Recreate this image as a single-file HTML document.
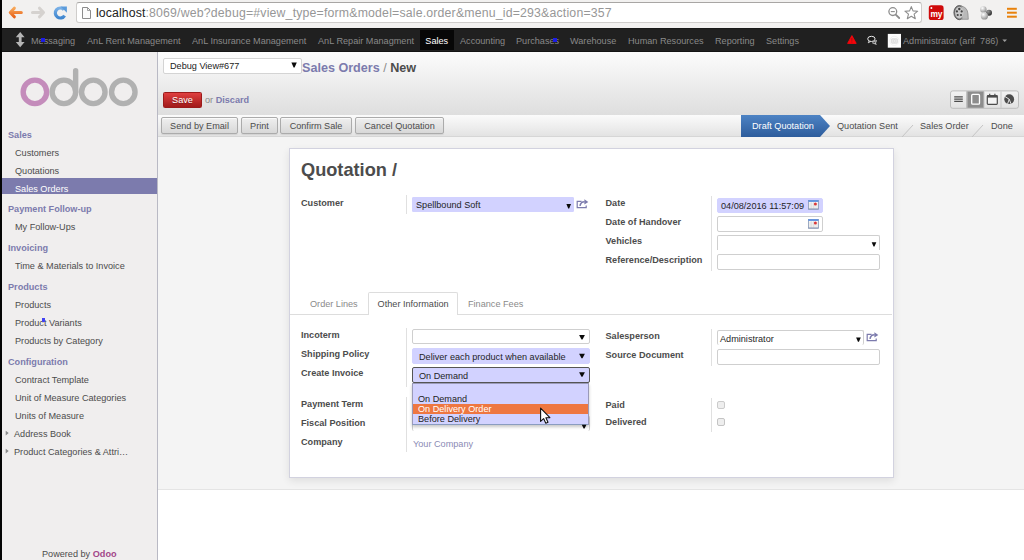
<!DOCTYPE html>
<html><head><meta charset="utf-8"><title>New - Odoo</title>
<style>
html,body{margin:0;padding:0;}
body{width:1024px;height:560px;overflow:hidden;position:relative;background:#fff;font-family:"Liberation Sans",sans-serif;font-size:9.15px;color:#4c4c4c;}
.abs{position:absolute;white-space:nowrap;}
/* browser chrome */
#chrome{left:0;top:0;width:1024px;height:28px;background:#f2f1f0;}
#urlbox{left:76px;top:2px;width:846px;height:21px;background:#fff;border:1px solid #cfcdcb;border-top-color:#a8a6a4;border-radius:3px;box-sizing:border-box;}
#url{left:96px;top:5px;font-size:12.3px;line-height:16px;color:#979797;letter-spacing:0.1px;}
#url b{font-weight:normal;color:#222;}
/* navbar */
#nav{left:0;top:28px;width:1024px;height:24px;background:#202020;box-shadow:inset 0 -1px 0 #141414, inset 0 1px 0 #181818;}
.nv{top:28px;height:24px;line-height:26px;font-size:9.15px;color:#898989;}
#nvsales{left:419.5px;width:34.5px;background:#070707;color:#fff;text-align:left;padding-left:5.8px;box-sizing:border-box;top:30.3px;height:19.6px;line-height:23px;}
/* left strip */
#strip{left:0;top:0;width:2px;height:560px;background:#040404;}
/* sidebar */
#side{left:2px;top:52px;width:155px;height:508px;background:#f0eeee;border-right:1px solid #b9b9c4;}
.sh{transform:translateY(0.6px);left:8px;font-weight:bold;color:#7c7bad;font-size:9.15px;line-height:12px;}
.si{transform:translateY(0.6px);left:15px;color:#4c4c4c;font-size:9.15px;line-height:12px;}
#sact{left:2px;top:178px;width:155px;height:15.9px;background:#7c7bad;}
/* main */
#hdr{left:158px;top:52px;width:866px;height:63px;background:linear-gradient(#fcfcfc,#dedede);}
#btnrow{left:158px;top:115px;width:866px;height:22px;background:linear-gradient(#fbfbfb,#e3e3e3);border-bottom:1px solid #d6d6d6;box-sizing:border-box;}
#sheetbg{left:158px;top:137px;width:866px;height:353px;background:#f4f4f4;border-bottom:1px solid #e4e4e4;box-sizing:border-box;}
#sheet{left:289px;top:148px;width:604.6px;height:329.5px;background:#fff;border:1px solid #d2d2df;box-sizing:border-box;box-shadow:0 3px 8px rgba(0,0,0,0.09);}
.btn{top:117px;height:17px;box-sizing:border-box;border:1px solid #ababab;border-radius:2px;background:linear-gradient(#efefef,#d8d8d8);color:#4c4c4c;font-size:9.15px;line-height:16px;text-align:center;box-shadow:inset 0 1px 0 rgba(255,255,255,0.7),0 1px 1px rgba(0,0,0,0.08);}
.lbl{font-weight:bold;color:#4c4c4c;font-size:9.15px;line-height:12px;}
.inp{box-sizing:border-box;border:1px solid #cfcfcf;border-radius:2px;background:#fff;font-size:9.15px;line-height:13px;color:#1f1f1f;padding-left:3px;}
.req{background:#d2d2ff;border-color:#d2d2ff;}
.vsep{width:1px;background:#e0e0e0;}
.arr{font-size:7px;color:#000;}
</style></head><body>
<div id="chrome" class="abs"></div>
<div id="urlbox" class="abs"></div>
<div id="url" class="abs"><b>localhost</b><span style="letter-spacing:0.18px">:8069/web?debug=#view_type=form&amp;model=sale.order&amp;menu_id=293&amp;action=357</span></div>


<!-- browser icons -->
<svg class="abs" style="left:0;top:0" width="1024" height="52" viewBox="0 0 1024 52">
<defs>
<linearGradient id="og" x1="0" y1="0" x2="0" y2="1"><stop offset="0" stop-color="#f7a85a"/><stop offset="1" stop-color="#e8641a"/></linearGradient>
<linearGradient id="bg2" x1="0" y1="0" x2="0" y2="1"><stop offset="0" stop-color="#79b0e6"/><stop offset="1" stop-color="#3f86cf"/></linearGradient>
<radialGradient id="ball" cx="0.35" cy="0.3" r="0.8"><stop offset="0" stop-color="#fff"/><stop offset="1" stop-color="#888"/></radialGradient>
<radialGradient id="ballk" cx="0.35" cy="0.3" r="0.8"><stop offset="0" stop-color="#999"/><stop offset="1" stop-color="#222"/></radialGradient>
</defs>
<!-- back -->
<path d="M21.3 12.5 H10.8 M14.3 8.2 L10.3 12.5 L14.3 16.8" stroke="url(#og)" stroke-width="3.1" stroke-linecap="round" stroke-linejoin="round" fill="none"/>
<!-- forward -->
<path d="M32.5 12.5 H43 M39.5 8.2 L43.5 12.5 L39.5 16.8" stroke="#d5d2cf" stroke-width="3.1" stroke-linecap="round" stroke-linejoin="round" fill="none"/>
<!-- reload -->
<path d="M64.6 15.6 A5.0 5.0 0 1 1 64.0 9.6" stroke="url(#bg2)" stroke-width="3.2" fill="none"/>
<path d="M60.6 6.4 H66.9 V12.7 Z" fill="#5b9bdb"/>
<!-- page icon -->
<path d="M82.5 7.5 H87.5 L90.5 10.5 V18.5 H82.5 Z" fill="#fbfbfb" stroke="#8c8c8c" stroke-width="1"/>
<path d="M87.5 7.5 V10.5 H90.5" fill="none" stroke="#8c8c8c" stroke-width="0.8"/>
<!-- zoom icon -->
<circle cx="892.8" cy="11.6" r="3.9" fill="none" stroke="#8d8d8d" stroke-width="1.3"/>
<path d="M895.7 14.6 L899.2 18" stroke="#8d8d8d" stroke-width="1.8" stroke-linecap="round"/>
<path d="M890.8 11.6 H894.8" stroke="#8d8d8d" stroke-width="1.1"/>
<!-- star -->
<path d="M911.3 6.6 L913.0 10.9 L917.7 11.2 L914.1 14.2 L915.3 18.7 L911.3 16.2 L907.3 18.7 L908.5 14.2 L904.9 11.2 L909.6 10.9 Z" fill="none" stroke="#8d8d8d" stroke-width="1.1" stroke-linejoin="round"/>
<!-- my icon -->
<rect x="928.8" y="5.3" width="14.8" height="14.7" rx="2.6" fill="#cf0a0a"/>
<circle cx="931.4" cy="8" r="1" fill="#fff"/>
<!-- film -->
<ellipse cx="959.3" cy="12.6" rx="5.4" ry="7.1" fill="#7d7d7d" stroke="#4a4a4a" stroke-width="0.8"/>
<path d="M961 6 Q967.5 7 968 14 L968.3 19.3 L962 19.3 Z" fill="#b9b9b9" stroke="#777" stroke-width="0.6"/>
<ellipse cx="959.3" cy="12.6" rx="4.2" ry="5.8" fill="#c9c9c9"/>
<circle cx="959.3" cy="9" r="1.2" fill="#444"/><circle cx="956.9" cy="11.4" r="1.1" fill="#444"/><circle cx="961.7" cy="11.4" r="1.1" fill="#444"/><circle cx="957.7" cy="15" r="1.1" fill="#444"/><circle cx="961" cy="15" r="1.1" fill="#444"/>
<!-- balls -->
<circle cx="989" cy="12.7" r="3.0" fill="url(#ballk)"/>
<circle cx="983.4" cy="9.4" r="3.2" fill="url(#ball)"/>
<circle cx="984.4" cy="15.9" r="3.6" fill="url(#ball)"/>
<!-- hamburger -->
<rect x="1007" y="7.8" width="9.8" height="2" fill="#e8820c"/>
<rect x="1007" y="11.7" width="9.8" height="2" fill="#e8820c"/>
<rect x="1007" y="15.7" width="9.8" height="2" fill="#e8820c"/>
</svg>
<div class="abs" style="left:929.4px;top:9.4px;width:14px;text-align:center;font-size:8.4px;line-height:11px;font-weight:bold;color:#fff;letter-spacing:-0.2px">my</div>
<div id="nav" class="abs"></div>
<div class="abs nv" style="left:31px">Messaging</div>
<div class="abs nv" style="left:87px">AnL Rent Management</div>
<div class="abs nv" style="left:192px">AnL Insurance Management</div>
<div class="abs nv" style="left:318px">AnL Repair Managment</div>
<div class="abs nv" id="nvsales">Sales</div>
<div class="abs nv" style="left:460px">Accounting</div>
<div class="abs nv" style="left:516px">Purchases</div>
<div class="abs nv" style="left:570px">Warehouse</div>
<div class="abs nv" style="left:628px">Human Resources</div>
<div class="abs nv" style="left:715px">Reporting</div>
<div class="abs nv" style="left:766px">Settings</div>
<div class="abs nv" style="left:903px">Administrator (arif&nbsp; 786)</div>

<div id="side" class="abs"></div>
<svg class="abs" style="left:0;top:28px" width="1024" height="24" viewBox="0 28 1024 24">
<!-- drag icon -->
<path d="M20.2 32 L24.6 37.3 H21.6 V41.9 H24.6 L20.2 47.2 L15.8 41.9 H18.8 V37.3 H15.8 Z" fill="#b5b5b5"/>
<!-- warning -->
<path d="M851.9 35.6 L856.2 43.4 H847.6 Z" fill="#f5050a" stroke="#f5050a" stroke-width="0.9" stroke-linejoin="round"/>
<rect x="851.4" y="38" width="1" height="2.8" fill="#a01010"/><rect x="851.4" y="41.5" width="1" height="1" fill="#a01010"/>
<!-- chat -->
<path d="M872.5 42 Q875.5 42.4 876.2 40.2 Q876.4 42.6 875.2 43 L876.3 44.3 L873.8 43.4 Q872.6 43.3 872.2 42.6" fill="none" stroke="#d9d9d9" stroke-width="0.9"/>
<ellipse cx="871.4" cy="38.9" rx="3.7" ry="2.6" fill="#1a1a1a" stroke="#e9e9e9" stroke-width="1"/>
<path d="M869.2 41 L868.2 42.8 L870.6 41.6" fill="none" stroke="#e9e9e9" stroke-width="0.8"/>
<!-- avatar -->
<rect x="887.8" y="33.9" width="13.2" height="13.8" fill="#fdfdfd"/>
<circle cx="894.4" cy="40.8" r="4.6" fill="none" stroke="#ececec" stroke-width="0.8"/><rect x="891.4" y="38.8" width="6" height="4.4" rx="0.6" fill="#e9e9e9" stroke="#d2d2d2" stroke-width="0.7"/>
<circle cx="894.4" cy="41" r="1.1" fill="#f6f6f6" stroke="#d2d2d2" stroke-width="0.6"/>
<!-- caret -->
<path d="M1002.4 39.6 H1007 L1004.7 42 Z" fill="#9d9d9d"/>
</svg>
<!-- logo -->
<svg class="abs" style="left:2px;top:52px" width="155" height="70" viewBox="2 52 155 70">
<circle cx="34.9" cy="91.9" r="11.75" fill="none" stroke="#c48cbb" stroke-width="5.4"/>
<circle cx="63.9" cy="91.9" r="11.75" fill="none" stroke="#b1b1b1" stroke-width="5.4"/>
<path d="M75.65 91.9 V70.8" stroke="#b1b1b1" stroke-width="5.4" stroke-linecap="round" fill="none"/>
<circle cx="93.3" cy="91.9" r="11.75" fill="none" stroke="#b1b1b1" stroke-width="5.4"/>
<circle cx="123.3" cy="91.9" r="11.75" fill="none" stroke="#b1b1b1" stroke-width="5.4"/>
</svg>

<div id="sact" class="abs"></div>
<div class="abs sh" style="top:128px">Sales</div>
<div class="abs si" style="top:146px">Customers</div>
<div class="abs si" style="top:164px">Quotations</div>
<div class="abs si" style="top:182px;color:#fff">Sales Orders</div>
<div class="abs sh" style="top:202px">Payment Follow-up</div>
<div class="abs si" style="top:220px">My Follow-Ups</div>
<div class="abs sh" style="top:241px">Invoicing</div>
<div class="abs si" style="top:259px">Time &amp; Materials to Invoice</div>
<div class="abs sh" style="top:280px">Products</div>
<div class="abs si" style="top:298px">Products</div>
<div class="abs si" style="top:316px">Product Variants</div>
<div class="abs si" style="top:334px">Products by Category</div>
<div class="abs sh" style="top:355px">Configuration</div>
<div class="abs si" style="top:373px">Contract Template</div>
<div class="abs si" style="top:391px">Unit of Measure Categories</div>
<div class="abs si" style="top:409px">Units of Measure</div>
<div class="abs si" style="top:427px;left:14px">Address Book</div>
<div class="abs si" style="top:445px;left:14px">Product Categories &amp; Attri…</div>
<div class="abs si" style="top:547px;left:42px">Powered by <b style="color:#a24689">Odoo</b></div>

<div id="hdr" class="abs"></div>
<div id="btnrow" class="abs"></div>
<div id="sheetbg" class="abs"></div>
<div id="sheet" class="abs"></div>

<div class="abs btn" style="left:161px;width:77px">Send by Email</div>
<div class="abs btn" style="left:241px;width:37px">Print</div>
<div class="abs btn" style="left:280px;width:72px">Confirm Sale</div>
<div class="abs btn" style="left:355px;width:89px">Cancel Quotation</div>


<!-- header controls -->
<div class="abs inp" style="left:163px;top:58px;width:138.5px;height:15.5px;padding-left:6px;line-height:14px;color:#222;border-color:#d4d4d4">Debug View#677</div>
<div class="abs" id="bc" style="left:302px;top:60.1px;font-size:12.6px;line-height:16px;font-weight:bold;color:#7c7bad">Sales Orders <span style="font-weight:normal;color:#8c8c8c">/</span> <span style="color:#4c4c4c">New</span></div>
<div class="abs" id="save" style="left:163px;top:92px;width:39px;height:16px;box-sizing:border-box;border:1px solid #9b1b1b;border-radius:1.5px;background:linear-gradient(#df3f3f,#a21a1a);color:#fff;font-size:9.15px;line-height:14.5px;text-align:center;text-shadow:0 1px 1px rgba(0,0,0,0.3)">Save</div>
<div class="abs" style="left:205px;top:94px;font-size:9.15px;line-height:12px;color:#8a8a8a">or <b style="color:#7c7bad">Discard</b></div>

<!-- sheet content -->
<div class="abs" id="h1" style="left:301px;top:158.8px;font-size:18.2px;line-height:22px;font-weight:bold;color:#4c4c4c">Quotation /</div>
<div class="abs lbl" style="left:301px;top:196.9px">Customer</div>
<div class="abs vsep" style="left:406px;top:195px;height:19px"></div>
<div class="abs inp req" style="left:412px;top:197px;width:162px;height:15px;line-height:14.6px;border-radius:1px">Spellbound Soft</div>

<div class="abs lbl" style="left:605.5px;top:197px">Date</div>
<div class="abs lbl" style="left:605.5px;top:216px">Date of Handover</div>
<div class="abs lbl" style="left:605.5px;top:235px">Vehicles</div>
<div class="abs lbl" style="left:605.5px;top:253.6px">Reference/Description</div>
<div class="abs vsep" style="left:711px;top:196px;height:75px"></div>
<div class="abs inp req" style="left:717px;top:198px;width:105.5px;height:15px;line-height:15.4px">04/08/2016 11:57:09</div>
<div class="abs inp" style="left:717px;top:216px;width:105.5px;height:15.6px"></div>
<div class="abs inp" style="left:717px;top:235px;width:163px;height:15px;border-bottom:none;border-radius:2px 2px 0 0"></div>
<div class="abs inp" style="left:717px;top:254px;width:163px;height:15.6px"></div>

<svg class="abs" style="left:576px;top:198.8px" width="13" height="11" viewBox="0 0 13 11"><path d="M5.6 2.4 H1.2 V8.7 H10.2 V6.6" fill="none" stroke="#7c7bad" stroke-width="1.2"/><path d="M4 6.8 Q4.6 2.9 8.6 2.8" fill="none" stroke="#7c7bad" stroke-width="1.6"/><path d="M8.4 0.2 L12.3 2.9 L8.4 5.6 Z" fill="#7c7bad"/></svg><svg class="abs" style="left:866.2px;top:332.4px" width="13" height="11" viewBox="0 0 13 11"><path d="M5.6 2.4 H1.2 V8.7 H10.2 V6.6" fill="none" stroke="#7c7bad" stroke-width="1.2"/><path d="M4 6.8 Q4.6 2.9 8.6 2.8" fill="none" stroke="#7c7bad" stroke-width="1.6"/><path d="M8.4 0.2 L12.3 2.9 L8.4 5.6 Z" fill="#7c7bad"/></svg><svg class="abs" style="left:808.2px;top:200.4px" width="11" height="10" viewBox="0 0 11 10"><rect x="0.4" y="0.4" width="10" height="8.8" fill="#f6f6f6" stroke="#8696b4" stroke-width="0.8"/><rect x="0.4" y="0.2" width="10" height="1.7" fill="#5b8fe2"/><path d="M1 4 H10 M1 6 H10 M1 8 H10 M3.2 2 V9 M5.6 2 V9" stroke="#d0d0d0" stroke-width="0.5"/><circle cx="7.4" cy="4.1" r="1.5" fill="#d9383a"/><rect x="0.4" y="8.6" width="10" height="0.8" fill="#7f8fb0"/></svg><svg class="abs" style="left:808.2px;top:219px" width="11" height="10" viewBox="0 0 11 10"><rect x="0.4" y="0.4" width="10" height="8.8" fill="#f6f6f6" stroke="#8696b4" stroke-width="0.8"/><rect x="0.4" y="0.2" width="10" height="1.7" fill="#5b8fe2"/><path d="M1 4 H10 M1 6 H10 M1 8 H10 M3.2 2 V9 M5.6 2 V9" stroke="#d0d0d0" stroke-width="0.5"/><circle cx="7.4" cy="4.1" r="1.5" fill="#d9383a"/><rect x="0.4" y="8.6" width="10" height="0.8" fill="#7f8fb0"/></svg>
<!-- tabs -->
<div class="abs" style="left:290px;top:314px;width:602px;height:1px;background:#ddd"></div>
<div class="abs" style="left:368px;top:292px;width:90px;height:23px;box-sizing:border-box;border:1px solid #ddd;border-bottom:none;background:#fff;border-radius:2px 2px 0 0"></div>
<div class="abs" style="left:310px;top:298px;line-height:12px;color:#8a8a8a">Order Lines</div>
<div class="abs" style="left:377.6px;top:298px;line-height:12px;color:#4c4c4c">Other Information</div>
<div class="abs" style="left:468px;top:298px;line-height:12px;color:#8a8a8a">Finance Fees</div>

<!-- left group -->
<div class="abs lbl" style="left:301px;top:329px">Incoterm</div>
<div class="abs lbl" style="left:301px;top:348px">Shipping Policy</div>
<div class="abs lbl" style="left:301px;top:367px">Create Invoice</div>
<div class="abs lbl" style="left:301px;top:398px">Payment Term</div>
<div class="abs lbl" style="left:301px;top:417px">Fiscal Position</div>
<div class="abs lbl" style="left:301px;top:435.6px">Company</div>
<div class="abs vsep" style="left:406px;top:328px;height:59px"></div>
<div class="abs vsep" style="left:406px;top:397px;height:55px"></div>
<div class="abs inp" style="left:412px;top:329.4px;width:177.6px;height:15px"></div>
<div class="abs inp req" style="left:412px;top:348px;width:177.6px;height:16px;padding-left:6px;line-height:16.6px">Deliver each product when available</div>
<div class="abs inp" style="left:412px;top:416px;width:177.6px;height:15px;border-bottom:none"></div>
<div class="abs inp req" style="left:412px;top:367px;width:177.6px;height:16px;padding-left:6px;line-height:16.6px;border-color:#555">On Demand</div>
<div class="abs" id="dd" style="left:412px;top:383px;width:177px;height:42px;box-sizing:border-box;background:#d2d2ff;border:1px solid #9a9ab0;border-color:#9a9ab8 #9a9ab8 #8a9cc0;box-shadow:0 2px 3px rgba(0,0,0,0.22)"></div>
<div class="abs" style="left:413px;top:404.4px;width:175px;height:9.4px;background:#ee7741"></div>
<div class="abs" style="left:418px;top:394px;line-height:10px;color:#222">On Demand</div>
<div class="abs" style="left:418px;top:404.1px;line-height:10px;color:#fff">On Delivery Order</div>
<div class="abs" style="left:418px;top:414.1px;line-height:10px;color:#222">Before Delivery</div>
<div class="abs" style="left:413px;top:438px;line-height:12px;color:#8c8bb5">Your Company</div>

<!-- right group -->
<div class="abs lbl" style="left:605.5px;top:330px">Salesperson</div>
<div class="abs lbl" style="left:605.5px;top:349px">Source Document</div>
<div class="abs lbl" style="left:605.5px;top:399px">Paid</div>
<div class="abs lbl" style="left:605.5px;top:416px">Delivered</div>
<div class="abs vsep" style="left:711px;top:329px;height:37px"></div>
<div class="abs vsep" style="left:711px;top:398px;height:34px"></div>
<div class="abs inp" style="left:717px;top:330px;width:147px;height:15px;border-bottom:none;line-height:16px;padding-left:2px">Administrator</div>
<div class="abs inp" style="left:717px;top:349px;width:163px;height:16px"></div>
<div class="abs" style="left:717px;top:400.5px;width:8px;height:8px;box-sizing:border-box;border:1px solid #cbcbcb;border-radius:2px;background:#eee"></div>
<div class="abs" style="left:717px;top:418px;width:8px;height:8px;box-sizing:border-box;border:1px solid #c4c4c4;border-radius:2px;background:#eee"></div>


<!-- view switcher -->
<svg class="abs" style="left:948px;top:88px" width="74" height="24" viewBox="948 88 74 24">
<defs><linearGradient id="swg" x1="0" y1="0" x2="0" y2="1"><stop offset="0" stop-color="#f3f3f3"/><stop offset="1" stop-color="#e2e2e2"/></linearGradient></defs>
<rect x="950.5" y="90.9" width="68" height="17.4" rx="2.2" fill="url(#swg)" stroke="#bdbdbd" stroke-width="1"/>
<rect x="966.5" y="91.4" width="17.5" height="16.4" fill="#8d8d8d"/>
<path d="M967 91.4 V107.8 M984 91.4 V107.8 M1001 91.4 V107.8" stroke="#c6c6c6" stroke-width="1"/>
<path d="M954.2 96.8 H962.8 M954.2 99.1 H962.8 M954.2 101.4 H962.8" stroke="#4c4c4c" stroke-width="1.2"/>
<rect x="971.7" y="94.4" width="7.8" height="9.8" rx="1" fill="#8d8d8d" stroke="#fff" stroke-width="1.3"/>
<rect x="987.3" y="95.6" width="10" height="8.7" rx="0.8" fill="#f4f4f4" stroke="#4c4c4c" stroke-width="1.2"/>
<rect x="987.3" y="95.4" width="10" height="2.2" fill="#4c4c4c"/>
<path d="M989.7 93.8 V96 M994.9 93.8 V96" stroke="#4c4c4c" stroke-width="1.2"/>
<circle cx="1009.2" cy="99.2" r="4.9" fill="#4c4c4c"/>
<path d="M1009.2 99.2 L1005 96.6 M1009.2 99.2 L1007.6 103.9 M1009.2 99.2 L1011 103.8" stroke="#f0f0f0" stroke-width="0.9" fill="none"/>
</svg>
<!-- statusbar -->
<svg class="abs" style="left:738px;top:114px" width="286" height="23" viewBox="0 0 286 23">
<defs><linearGradient id="bl" x1="0" y1="0" x2="0" y2="1"><stop offset="0" stop-color="#4d83c4"/><stop offset="1" stop-color="#2d5c9c"/></linearGradient></defs>
<polygon points="3,1 82,1 92,12 82,23 3,23" fill="url(#bl)"/>
<path d="M164 23 L175 11" stroke="#c4c4c4" stroke-width="1" fill="none"/>
<path d="M234 23 L245 11" stroke="#c4c4c4" stroke-width="1" fill="none"/>
</svg>
<div class="abs" style="left:752px;top:120px;line-height:12px;color:#fff">Draft Quotation</div>
<div class="abs" style="left:837px;top:120px;line-height:12px;color:#4c4c4c">Quotation Sent</div>
<div class="abs" style="left:920px;top:120px;line-height:12px;color:#4c4c4c">Sales Order</div>
<div class="abs" style="left:991px;top:120px;line-height:12px;color:#4c4c4c">Done</div>
<div class="abs" style="left:41.4px;top:38.3px;width:3.8px;height:3.4px;background:#1c1ce6"></div>
<div class="abs" style="left:553.2px;top:37.9px;width:3.9px;height:4.1px;background:#1c1ce6"></div>
<div class="abs" style="left:41.6px;top:318.1px;width:3.5px;height:3.6px;background:#4343f2"></div>
<svg class="abs" style="left:0;top:420px" width="20" height="50" viewBox="0 420 20 50" fill="#8c8c8c"><path d="M5.7 430.7 V435.5 L8.7 433.1 Z"/><path d="M5.7 448.7 V453.5 L8.7 451.1 Z"/></svg>
<!-- arrows -->
<svg class="abs" style="left:0;top:0" width="1024" height="560" viewBox="0 0 1024 560" fill="#0a0a0a"><path d="M291.4 62.6 H296.8 L294.60 67.6 H293.60 Z"/><path d="M566.4 204.1 H571.0 L569.20 208.4 H568.20 Z"/><path d="M871.7 242.3 H876.3 L874.50 246.6 H873.50 Z"/><path d="M579.1 334.9 H584.9 L582.50 339.4 H581.50 Z"/><path d="M579.1 353.7 H584.9 L582.50 358.2 H581.50 Z"/><path d="M579.1 372.2 H584.9 L582.50 376.7 H581.50 Z"/><path d="M581.8 424.7 H586.4 L584.60 428.6 H583.60 Z"/><path d="M856.1 337.4 H860.8 L858.95 341.7 H857.95 Z"/></svg>
<svg class="abs" style="left:538px;top:406px" width="16" height="20" viewBox="-2.6 -2.2 16 20"><path d="M0 0 L0 13.2 L3 10.4 L5.2 15 L7.4 14 L5.3 9.6 L9.3 9.4 Z" fill="#fff" stroke="#111" stroke-width="1.1" stroke-linejoin="round"/></svg>
<div id="strip" class="abs"></div>
</body></html>
